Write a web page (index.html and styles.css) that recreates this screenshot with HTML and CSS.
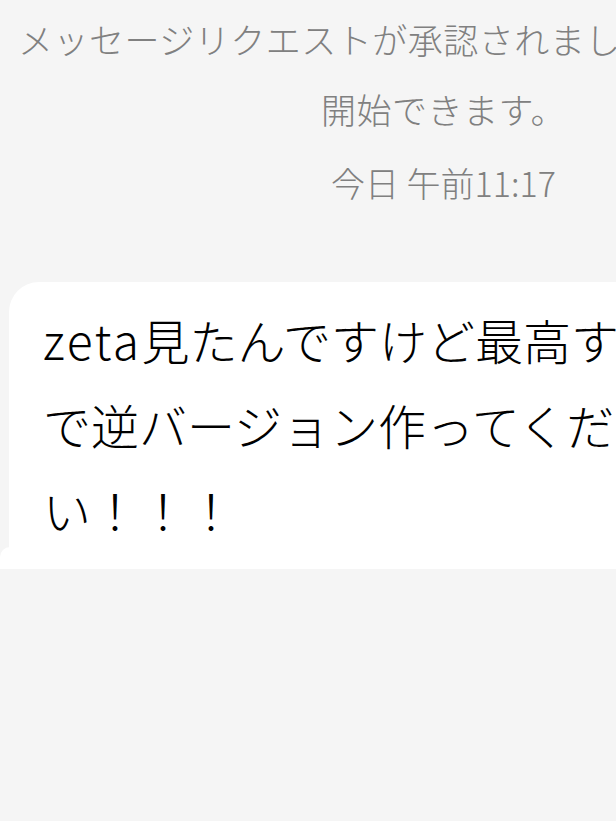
FILE: index.html
```html
<!DOCTYPE html>
<html lang="ja">
<head>
<meta charset="utf-8">
<title>メッセージ</title>
<link rel="stylesheet" href="styles.css">
</head>
<body>
<main class="thread">
  <div class="notice">
    <p class="notice-text">メッセージリクエストが承認されました。チャットを開始できます。</p>
    <p class="timestamp">今日 午前11:17</p>
  </div>
  <div class="bubble">
    <p class="bubble-text"><span class="latin">zeta</span>見たんですけど最高すぎるの<br>で逆バージョン作ってくださ<br>い！！！</p>
  </div>
</main>
</body>
</html>
```

FILE: styles.css
```css
html, body {
  margin: 0;
  padding: 0;
  overflow: hidden;
  background: #f5f5f5;
}

body {
  width: 616px;
  height: 821px;
  font-family: "Noto Sans CJK JP", "Noto Sans", sans-serif;
  font-weight: 300;
}

.thread {
  display: flex;
  flex-direction: column;
  align-items: flex-start;
}

.notice {
  width: 853px;
  margin-left: 17px;
  margin-top: 4px;
  flex-shrink: 0;
  text-align: center;
  color: #808080;
}

.notice-text {
  margin: 0;
  font-size: 35px;
  line-height: 70px;
  letter-spacing: 0.5px;
}

.timestamp {
  margin: 0;
  font-size: 34px;
  line-height: 78px;
}

.bubble {
  position: relative;
  flex-shrink: 0;
  width: 860px;
  margin-top: 60px;
  margin-left: 9px;
  padding: 15px 0 17px 34px;
  background: #ffffff;
  border-radius: 30px 30px 30px 0;
}

.bubble::before {
  content: "";
  position: absolute;
  left: -9px;
  bottom: 0;
  width: 20px;
  height: 22px;
  background: #ffffff;
  border-top-left-radius: 10px;
}

.bubble-text {
  margin: 0;
  font-size: 48px;
  line-height: 85px;
  color: #000000;
  white-space: nowrap;
}

.latin {
  letter-spacing: 2.5px;
}
```
